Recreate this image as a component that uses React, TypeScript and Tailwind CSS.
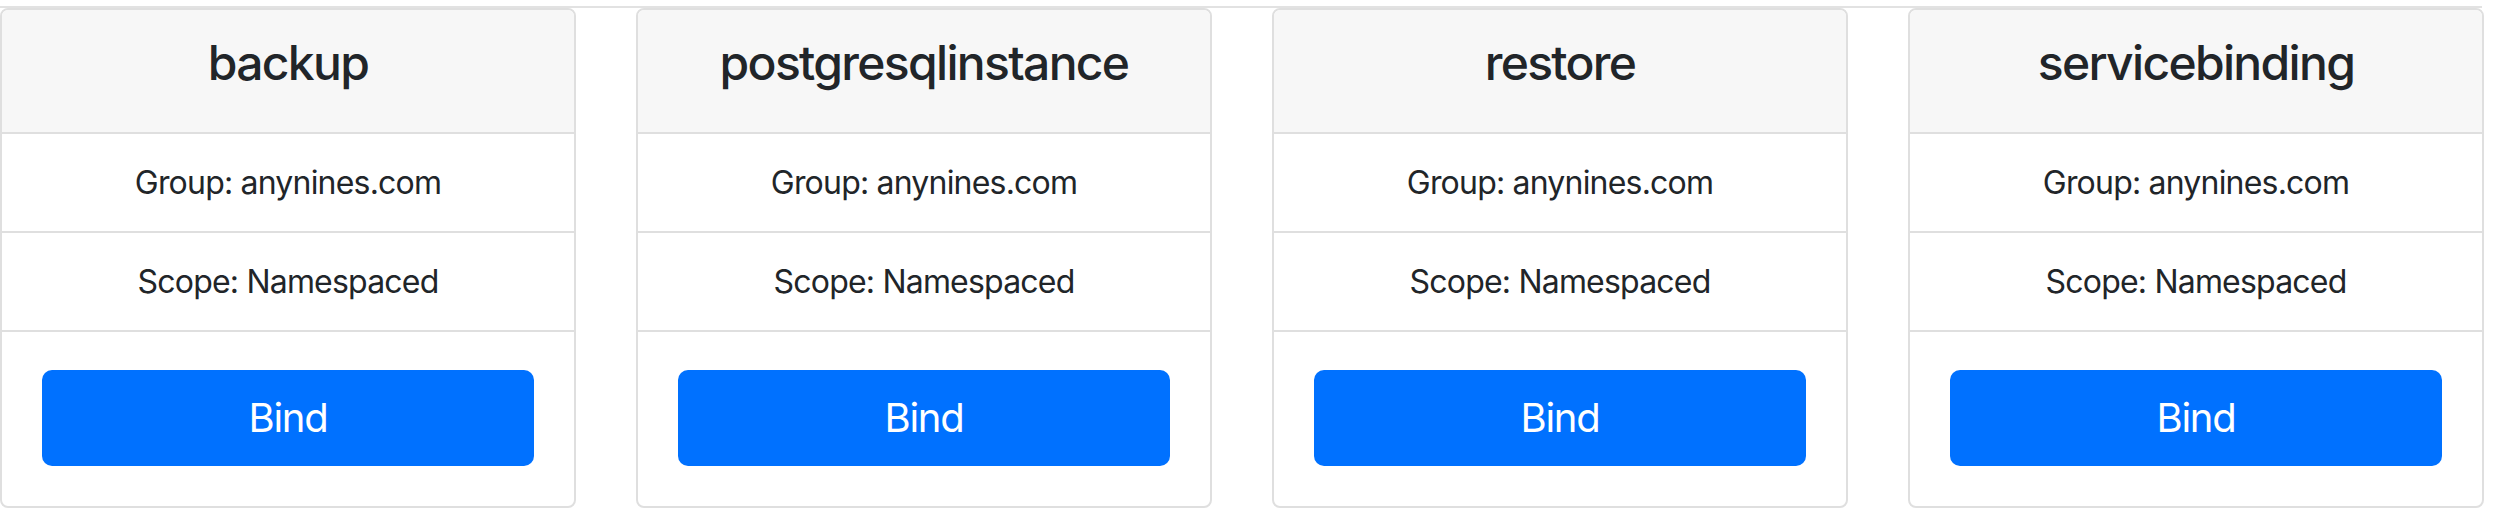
import React from "react";

const items = ["backup", "postgresqlinstance", "restore", "servicebinding"];

function Card({ name }: { name: string }) {
  return (
    <div className="w-[576px] shrink-0 rounded-[8px] border-2 border-[#dfdfdf] bg-white overflow-hidden flex flex-col">
      <div className="h-[124px] bg-[#f7f7f7] px-[40px] pt-[24px] border-b-2 border-[#dfdfdf]">
        <h4 className="text-center text-[48px] leading-[58px] font-medium tracking-[-0.035em] text-[#212529]">{name}</h4>
      </div>
      <div className="h-[99px] flex items-center justify-center border-b-2 border-[#dfdfdf] text-[32px] tracking-[-0.025em] text-[#212529]">
        Group: anynines.com
      </div>
      <div className="h-[99px] flex items-center justify-center border-b-2 border-[#dfdfdf] text-[32px] tracking-[-0.025em] text-[#212529]">
        Scope: Namespaced
      </div>
      <div className="px-[40px] pt-[38px] pb-[40px]">
        <button className="w-full h-[96px] rounded-[10px] bg-[#0071ff] text-white text-[40px] leading-none tracking-[-0.03em]">
          Bind
        </button>
      </div>
    </div>
  );
}

export default function App() {
  return (
    <div className="w-[2496px] h-[530px] bg-white" style={{ fontFamily: "Inter, 'Noto Sans', sans-serif" }}>
      <div className="pt-[6px]">
        <div className="w-[2482px] h-[2px] bg-[#e2e2e2]" />
        <div className="flex gap-[60px]">
          {items.map((n) => (
            <Card key={n} name={n} />
          ))}
        </div>
      </div>
    </div>
  );
}
